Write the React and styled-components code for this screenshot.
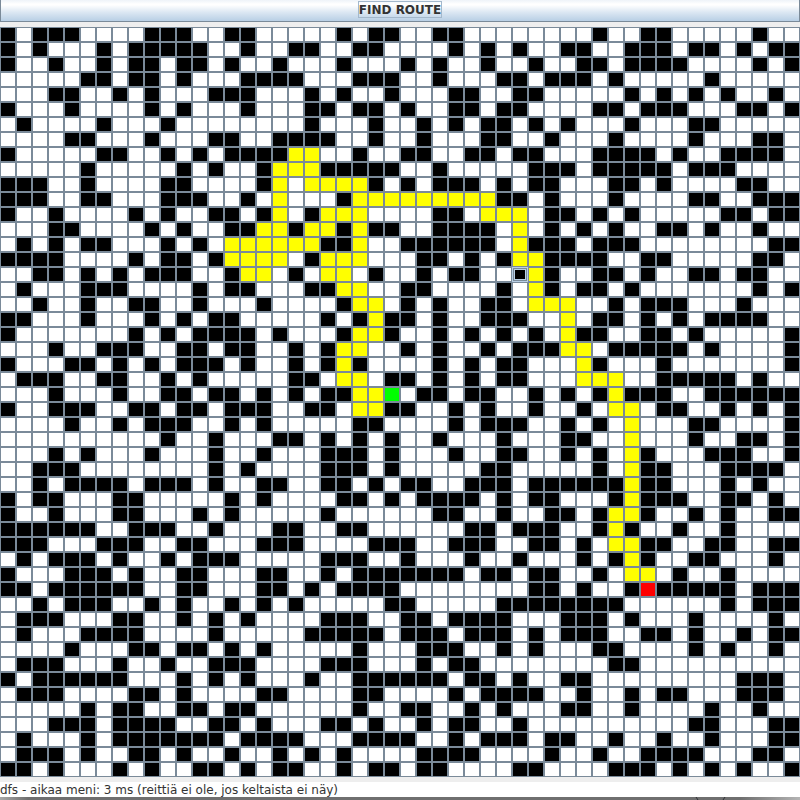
import React from "react";
import styled, { createGlobalStyle, css } from "styled-components";

// "#" wall, "." free, "y" route, "g" start, "r" goal, "f" wall holding the focus
const MAP = `
#.###....###..##. ....#.##..##..... ...#..##.....#..
#.#...#.#####..#. .##..##....#.#.#. .##..###.##.#.##
#..#..#.##.##.#.. #...#...#.#..#..# ..##.####....#.#
.....##.##.#...## ##...###..#...##. ###.#.....#.....
...##..#.#...###. ..#.#..#...##..## .....#.#.#.#..#.
#...#....#.#...#. ..##.##.#..##.##. ...##.###...##.#
.#....#...#...... ..#...#..#.#.##.# .#...#...##.....
....##...#...##.. ####..#..#...##.. #...#....#...##.
#.....##..#.#.### #yy..#..##..##.## ...####.#..####.
.....#.....#.#..# yyy#####..#.....# ##.#####.###....
###..#....##....# y.yyyy#.#.###.#.# #...##.#....##..
###..##...###..#. y...#yyyyyyyyy##. #...#....##..###
#..#....#.#..##.# y.#yyy....##.yyy. ##.#.#.....##.##
...##....#.#..##y y#yy#y##..####.y. #.#.#..##.#..#..
.#.#.##...#.#.yyy yyy##y..######.y# ##.###........##
####....#.##.#yyy y.#yyy...##.#.#yy ####..##.....##.
..##.#.#.###..#yy .#.yy.#..#.##..fy #..##.#..##.##..
.#...###....#.##. ..##yy..##....#.y #.##.#.......#.#
..#..#..##..#...# ....#yy.#.#..##.y yy..#.###...#...
##...#...#.#.##.. ...#.#y##.#..###. .y.##.#.#.####..
#.......#.#.####. #...#yy#..#.#.#.# .y##..##.#.....#
...#..###..##.##. .#.#yy..#.#..#.## #yy.#####.#....#
#...##.#.#.###.#. .#.#y#....#.#.##. ..y#...#.......#
.###..##..#.#.... .##.yy.##.#.#.##. ..yyy..#####.#..
...#...#..##.##.# .#.##yyg.##.##..# .#.#y###..######
#..###..##.##.### ..##.yy##..#.#..# ..#.yy.##..#.#.#
....#..#.###..#.# .....##....#.###. .#.#.y...##....#
..........#..#... ##.#.#.#..#...#.. .##..y...#..##.#
...#.#...#...#..# ...###.#...#..##. .#.#.y#...###..#
..###........#.#. ...###.#.....##.. ...#.y##...####.
..#.####.###.#..# #..##.#.##..###.# #####y##...#.#..
#.##...##.....#.# ....##.#.####.#.# #...#y###..##.#.
#..#...##...#.#.. ...#......##..#.. ##.#yy#..#.#..##
######..###..#... ##..##......##.## #..#y#..#..#....
###...###..##...# ##....###..###..# #.#.yy##..##..##
.#.###.#..#.###.. ...###..#...#..#. ..#.#y#..##...#.
#...###.#..##...# #..#.#######.##.# #..#.yy.#..#....
##.######..##...# #.#.####........# #.#..#r#####.###
..#.###..#.#..#.# .#.....##.....### #####......#.###
.###...##..#.#.#. ...###..##.####.. .###.#...#....#.
.#...####....#... ..#####.###.###.# .###..##.#..#.##
....#...##.##.#.# .....#...###..#.# ...##....#.#..#.
.###...#..#..###. ...###...#.##.... ....##..........
#.######...#.#.#. ..#..######.##.#. .##.........###.
.###....##.#....# #....##....#.#### ..#..#.##...###.
.....#.##..##.##. .....#..##..#.#.. .##..#....#..#..
...###.####..##.# ...##.#..#.##..#. .........##...##
.#...#.#######.## ##...####..#.###. ##..#..#..#...##
.###.#..##.#..#.. #.#.#....####.... #..#..####...##.
##.#...#.#..##.#. ##..#.##.##....## ....###.#.#.#..#
`
  .trim()
  .split("\n")
  .map((row) => row.replaceAll(" ", "").split(""));

const FILL = {
  "#": "#000000",
  ".": "#ffffff",
  y: "#ffff00",
  g: "#00ff00",
  r: "#ff0000",
  f: "#000000",
};

const KIND = { "#": "wall", ".": "free", y: "route", g: "start", r: "goal", f: "wall" };

const GlobalStyle = createGlobalStyle`
  * { box-sizing: border-box; }
  body {
    margin: 0;
    background: #eeeeee;
    color: #333333;
    font-family: "DejaVu Sans", sans-serif;
    font-size: 12px;
  }
`;

const Window = styled.main`
  display: flex;
  flex-direction: column;
  min-height: 100vh;
  overflow: hidden;
`;

const RouteButton = styled.button`
  display: flex;
  justify-content: center;
  align-items: flex-start;
  width: 100%;
  height: 22px;
  margin: 0 0 5px;
  padding: 1px 0 0;
  border: solid #7a8a99;
  border-width: 0 1px 1px;
  background: linear-gradient(#eef3f9 0, #ffffff 4px, #ffffff 5px, #dde8f3 12px, #b8cfe5 100%);
  color: #333333;
  font: bold 12px/14px "DejaVu Sans", sans-serif;
`;

const ButtonText = styled.span`
  padding-top: 1px;
  border: 1px solid #a3b8cc;
`;

const Board = styled.div`
  display: grid;
  grid-template-columns: repeat(50, 1fr);
`;

const Cell = styled.button`
  display: block;
  min-width: 0;
  aspect-ratio: 16 / 15;
  margin: 0;
  padding: 0;
  border: 1px solid #7a8a99;
  background: ${({ $kind }) => FILL[$kind]};
  ${({ $kind }) =>
    $kind === "f" &&
    css`
      border-color: #b8cfe5;
      box-shadow: inset 0 0 0 1px #7a8a99, inset 0 0 0 2px #b8cfe5;
    `}
`;

const Status = styled.output`
  display: block;
  margin-top: 5px;
  padding-top: 1px;
  background: #ffffff;
  line-height: 14px;
  white-space: nowrap;
`;

const Edge = styled.footer`
  flex: 1;
  display: flex;
  justify-content: flex-end;
  min-height: 3px;
  padding-right: 73px;
  background: linear-gradient(90deg, #a8a8a8, #6f6f6f 28px, #6f6f6f calc(100% - 60px), #b4b4b4);
`;

export default function App() {
  return (
    <>
      <GlobalStyle />
      <Window>
        <RouteButton type="button">
          <ButtonText>FIND ROUTE</ButtonText>
        </RouteButton>
        <Board>
          {MAP.map((row, y) =>
            row.map((kind, x) => (
              <Cell
                key={`${x}-${y}`}
                type="button"
                $kind={kind}
                aria-label={`${KIND[kind]} ${x}, ${y}`}
              />
            ))
          )}
        </Board>
        <Status>dfs - aikaa meni: 3 ms (reittiä ei ole, jos keltaista ei näy)</Status>
        <Edge>
          <svg width="32" height="3" viewBox="0 0 32 3" aria-hidden="true">
            <path d="M1 0l2 3M30 0l-2 3" stroke="#2f3035" strokeWidth="1" />
          </svg>
        </Edge>
      </Window>
    </>
  );
}
